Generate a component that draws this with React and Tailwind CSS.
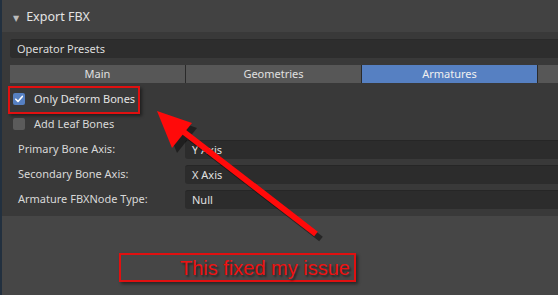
import React from "react";

const tabs = ["Main", "Geometries", "Armatures"];

function Checkbox({ checked }) {
  return (
    <span
      className={
        "flex h-[12px] w-[12px] items-center justify-center rounded-[2px] " +
        (checked ? "bg-[#5680c2]" : "bg-[#5b5b5b]")
      }
    >
      {checked && (
        <svg width="10" height="10" viewBox="0 0 10 10">
          <path d="M1.8 5.2 L4 7.4 L8.3 2.4" fill="none" stroke="#fff" strokeWidth="1.6" strokeLinecap="round" strokeLinejoin="round" />
        </svg>
      )}
    </span>
  );
}

function Field({ label, value }) {
  return (
    <div className="flex h-[19px] items-center">
      <span className="w-[175px] pl-[8px] text-[11px] text-[#d8d8d8]">{label}</span>
      <div className="flex h-full flex-1 items-center rounded-l-[3px] border-t border-[#262626] bg-[#2c2c2c] pl-[7px] text-[11px] text-[#e0e0e0]">
        {value}
      </div>
    </div>
  );
}

export default function App() {
  return (
    <div
      className="relative h-[295px] w-[558px] overflow-hidden border-l-2 border-[#22303f] bg-[#464646]"
      style={{ fontFamily: '"Noto Sans", "DejaVu Sans", sans-serif' }}
    >
      <div className="flex h-[32px] items-center bg-[#424242] pl-[11px] pt-[3px] text-[12.5px] text-[#e4e4e4]">
        <span className="mr-[7px] text-[8px] text-[#bbbbbb]">▼</span>
        Export FBX
      </div>

      <div className="flex flex-col bg-[#393939] pb-[7px] pl-[8px] pt-[7px]">
        <div className="flex h-[19px] items-center rounded-l-[3px] border-t border-[#2a2a2a] bg-[#2d2d2d] pl-[7px] text-[11px] text-[#dcdcdc]">
          Operator Presets
        </div>

        <div className="mt-[7px] flex h-[18px] gap-[1px] bg-[#2a2a2a]">
          {tabs.map((t) => (
            <div
              key={t}
              className={
                "flex w-[175px] items-center justify-center text-[11px] " +
                (t === "Armatures" ? "bg-[#5680c2] text-[#f0f0f0]" : "bg-[#575757] text-[#e0e0e0]")
              }
            >
              {t}
            </div>
          ))}
          <div className="flex-1 bg-[#575757]" />
        </div>

        <div className="mt-[9px] flex h-[14px] items-center gap-[9px] pl-[3px] text-[11px] text-[#e4e4e4]">
          <Checkbox checked />
          Only Deform Bones
        </div>
        <div className="mt-[11px] flex h-[14px] items-center gap-[9px] pl-[3px] text-[11px] text-[#d8d8d8]">
          <Checkbox />
          Add Leaf Bones
        </div>

        <div className="mt-[9px] flex flex-col gap-[6px]">
          <Field label="Primary Bone Axis:" value="Y Axis" />
          <Field label="Secondary Bone Axis:" value="X Axis" />
          <Field label="Armature FBXNode Type:" value="Null" />
        </div>
      </div>

      {/* annotation: box around the checkbox */}
      <div className="absolute left-[6px] top-[86px] h-[28px] w-[132px] border-2 border-[#e01010] shadow-[2px_2px_3px_rgba(0,0,0,0.45)]" />

      {/* annotation: arrow */}
      <svg className="absolute left-0 top-0" width="558" height="295" viewBox="0 0 558 295">
        <g transform="translate(3 3)" opacity="0.45">
          <line x1="316" y1="236" x2="180" y2="131" stroke="#000" strokeWidth="6" />
          <polygon points="157,113 192,125 172,150" fill="#000" />
        </g>
        <line x1="314" y1="234" x2="178" y2="129" stroke="#ff0a0a" strokeWidth="6" />
        <polygon points="155,111 190,123 170,148" fill="#ff0a0a" />
      </svg>

      {/* annotation: caption */}
      <div className="absolute left-[117px] top-[253px] flex h-[29px] w-[237px] items-center justify-end border-2 border-[#e01010] pr-[4px] shadow-[2px_2px_3px_rgba(0,0,0,0.45)]">
        <span
          className="text-[20px] leading-none text-[#ee1111] [text-shadow:2px_2px_2px_rgba(0,0,0,0.45)]"
          style={{ fontFamily: '"Liberation Sans", Arial, sans-serif' }}
        >
          This fixed my issue
        </span>
      </div>
    </div>
  );
}
